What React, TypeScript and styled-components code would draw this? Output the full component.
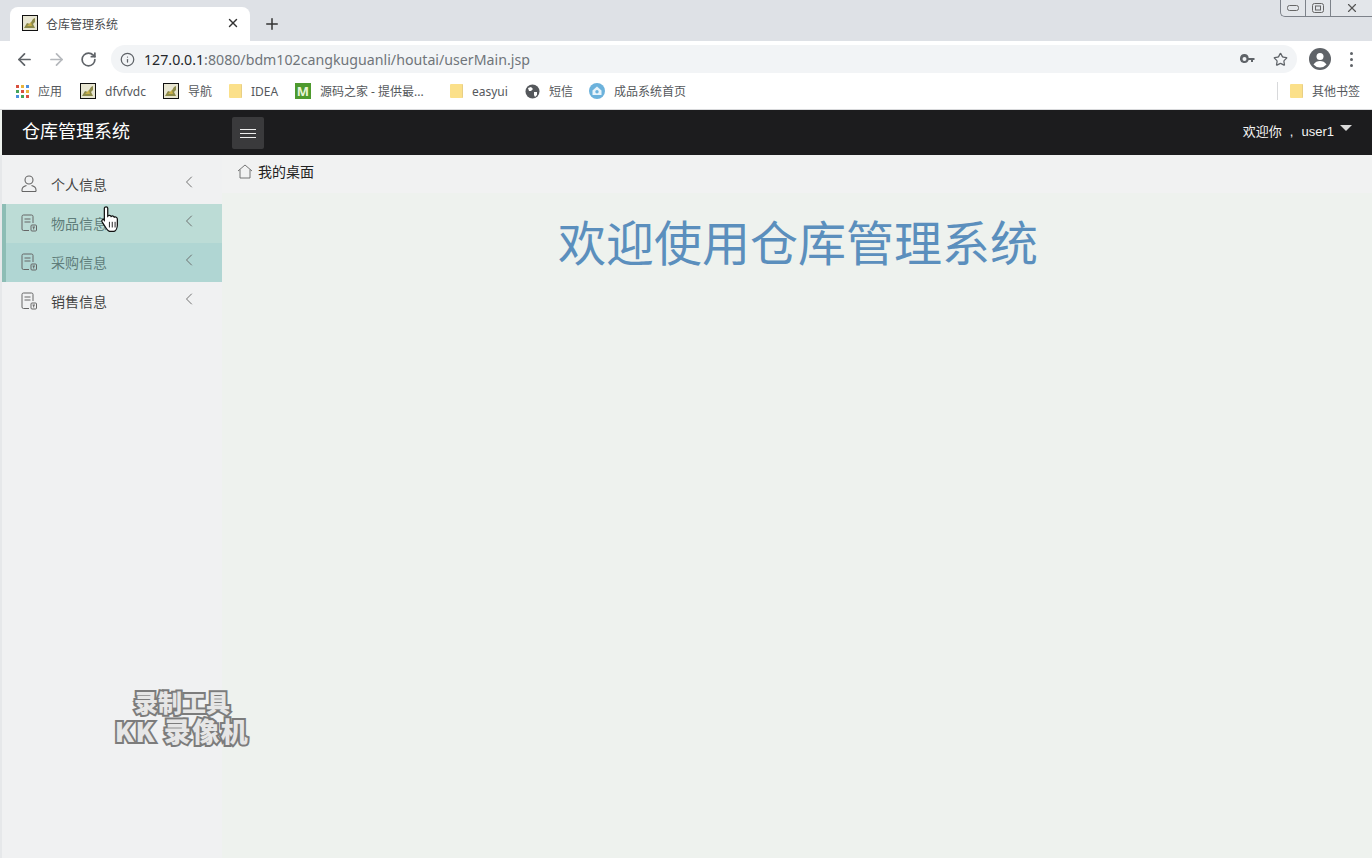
import React from 'react';
import styled, { createGlobalStyle } from 'styled-components';
import { ArrowLeft, ArrowRight, RotateCw, Info, Star, X, Plus, ChevronLeft } from 'lucide-react';

const GlobalStyle = createGlobalStyle`
  html, body {
    margin: 0;
    padding: 0;
    height: 100%;
    overflow: hidden;
  }
  body {
    font-family: "Liberation Sans", "Noto Sans CJK SC", sans-serif;
    background: #eef2ee;
  }
`;

const browserFont = '"Noto Sans", "Noto Sans CJK SC", sans-serif';

const Page = styled.div`
  position: relative;
  width: 1372px;
  height: 858px;
  display: flex;
  flex-direction: column;
  overflow: hidden;
`;

const TabStrip = styled.div`
  height: 41px;
  flex: none;
  display: flex;
  align-items: flex-end;
  padding-left: 10px;
  background: #dee1e6;
  position: relative;
`;
const Tab = styled.div`
  width: 240px;
  height: 34px;
  box-sizing: border-box;
  padding: 0 10px 2px 12px;
  display: flex;
  align-items: center;
  gap: 8px;
  background: #fff;
  border-radius: 8px 8px 0 0;
  font-size: 12px;
  color: #4a4c4f;
`;
const TabTitle = styled.span`
  flex: 1;
`;
const NewTab = styled.div`
  width: 44px;
  height: 34px;
  display: flex;
  align-items: center;
  justify-content: center;
  color: #333;
`;
const WindowControls = styled.div`
  position: absolute;
  top: -1px;
  right: 0;
  display: flex;
  height: 16px;
  border: 1px solid #7d828a;
  border-right: none;
  border-radius: 0 0 0 5px;
  background: #e3e6ea;
`;
const WindowButton = styled.div<{ $w: number }>`
  width: ${(p) => p.$w}px;
  display: flex;
  align-items: center;
  justify-content: center;
  color: #555;
  & + & {
    border-left: 1px solid #7d828a;
  }
`;

const Toolbar = styled.div`
  height: 36px;
  flex: none;
  display: flex;
  align-items: center;
  padding: 0 10px 0 8px;
  background: #fff;
  color: #5f6368;
`;
const NavButton = styled.div<{ $off?: boolean }>`
  width: 32px;
  height: 20px;
  display: flex;
  align-items: center;
  justify-content: center;
  color: ${(p) => (p.$off ? '#b5b8bc' : '#5f6368')};
`;
const Omnibox = styled.div`
  width: 1186px;
  height: 28px;
  margin-left: 7px;
  box-sizing: border-box;
  padding: 0 1px 0 9px;
  display: flex;
  align-items: center;
  border-radius: 14px;
  background: #f2f4f6;
  font-family: ${browserFont};
  font-size: 14.2px;
`;
const Url = styled.div`
  flex: 1;
  margin-left: 9px;
  color: #70757a;
  b {
    font-weight: 400;
    color: #26282b;
  }
`;
const OmniAction = styled.div`
  width: 32px;
  display: flex;
  justify-content: center;
  color: #5f6368;
`;
const ProfileSlot = styled.div`
  margin-left: 12px;
  display: flex;
`;
const MoreDots = styled.div`
  margin-left: 19px;
  display: flex;
  flex-direction: column;
  gap: 3px;
  i {
    width: 3px;
    height: 3px;
    border-radius: 50%;
    background: #5f6368;
  }
`;

const Bookmarks = styled.div`
  height: 33px;
  flex: none;
  box-sizing: border-box;
  display: flex;
  align-items: center;
  padding: 0 12px 4px 16px;
  background: #fff;
  border-bottom: 1px solid #d8d9db;
  font-family: ${browserFont};
  font-size: 12px;
  color: #55585c;
`;
const Bookmark = styled.div<{ $w: number }>`
  width: ${(p) => p.$w}px;
  flex: none;
  display: flex;
  align-items: center;
  gap: 9px;
  white-space: nowrap;
`;
const Spring = styled.div`
  flex: 1;
`;
const OtherBookmarks = styled.div`
  display: flex;
  align-items: center;
  gap: 9px;
  height: 18px;
  padding-left: 12px;
  border-left: 1px solid #d8d9db;
`;
const Folder = styled.div`
  width: 12px;
  height: 14px;
  background: #fbe08a;
  border-radius: 1px;
  border-right: 1px solid #e8cf85;
`;
const AppsGrid = styled.div`
  display: grid;
  grid-template-columns: repeat(3, 3px);
  gap: 2px;
`;
const AppDot = styled.i<{ $c: string }>`
  width: 3px;
  height: 3px;
  background: ${(p) => p.$c};
`;
const MLogo = styled.div`
  width: 16px;
  height: 16px;
  display: flex;
  align-items: center;
  justify-content: center;
  background: #4e9a2e;
  color: #e8f5d8;
  font-size: 13px;
  font-weight: 700;
`;

const TopBar = styled.header`
  height: 45px;
  flex: none;
  margin-left: 2px;
  display: flex;
  align-items: center;
  padding: 0 20px;
  background: #1c1c1e;
  color: #fff;
`;
const Brand = styled.div`
  width: 210px;
  font-size: 18px;
  margin-top: -5px;
`;
const MenuToggle = styled.div`
  width: 32px;
  height: 32px;
  display: flex;
  flex-direction: column;
  align-items: center;
  justify-content: center;
  gap: 3px;
  background: #3a3a3c;
  border-radius: 2px;
  margin-top: 1px;
  i {
    width: 16px;
    height: 1px;
    background: #eee;
  }
`;
const Welcome = styled.div`
  margin-left: auto;
  display: flex;
  align-items: center;
  gap: 6px;
  font-size: 13px;
  word-spacing: 4.5px;
  margin-top: -4px;
  color: #f4f4f4;
`;
const Caret = styled.i`
  width: 0;
  height: 0;
  margin-top: -5px;
  border-left: 6px solid transparent;
  border-right: 6px solid transparent;
  border-top: 6px solid #d8d8d8;
`;

const Body = styled.div`
  flex: 1;
  display: flex;
  padding-left: 2px;
  background: #e6e8ea;
`;
const Sidebar = styled.nav`
  width: 220px;
  flex: none;
  box-sizing: border-box;
  padding-top: 10px;
  background: #f0f1f2;
`;
const MenuItem = styled.div<{ $tone?: string }>`
  height: 39px;
  box-sizing: border-box;
  display: flex;
  align-items: center;
  padding: 0 23px 0 ${(p) => (p.$tone ? '15px' : '19px')};
  background: ${(p) => p.$tone || 'transparent'};
  border-left: ${(p) => (p.$tone ? '4px solid #8dbdb5' : 'none')};
  color: ${(p) => (p.$tone ? '#5f7d7a' : '#444')};
  font-size: 14px;
`;
const MenuIcon = styled.div`
  width: 16px;
  height: 18px;
  margin-right: 14px;
  margin-top: -1px;
  color: #666;
`;
const MenuLabel = styled.span`
  flex: 1;
  margin-top: -2px;
`;
const MenuChevron = styled.div`
  display: flex;
  margin-top: -5px;
  color: #666;
`;

const Main = styled.main`
  flex: 1;
  background: #eef2ee;
`;
const Crumb = styled.div`
  height: 38px;
  box-sizing: border-box;
  display: flex;
  align-items: center;
  gap: 5px;
  padding: 0 0 6px 15px;
  background: #f1f2f2;
  font-size: 14px;
  color: #222;
`;
const Heading = styled.h1`
  margin: 22px 0 0;
  padding-left: 2px;
  text-align: center;
  font-size: 48px;
  font-weight: 400;
  line-height: 60px;
  color: #5b8fbd;
`;

const Cursor = styled.svg`
  position: absolute;
  left: 100px;
  top: 206px;
`;
const Watermark = styled.div`
  position: absolute;
  left: 100px;
  top: 687px;
  width: 164px;
  text-align: center;
  font-family: "Noto Sans CJK SC", sans-serif;
  font-weight: 900;
  line-height: 29px;
  color: #e6e6e6;
  -webkit-text-stroke: 4px #7c7c7c;
  paint-order: stroke fill;
  white-space: nowrap;
`;
const WatermarkTop = styled.div`
  font-size: 24px;
`;
const WatermarkBottom = styled.div`
  font-size: 27px;
  letter-spacing: 1.5px;
`;

const Favicon = () => (
  <svg width="16" height="16" viewBox="0 0 16 16">
    <rect x="0.5" y="0.5" width="15" height="15" fill="#e8e6d2" stroke="#111" />
    <path d="M2 13 L5 8 L8 9 L11 4 L13 3 L13 7 L11 9 L13 13 Z" fill="#8c8a4a" />
    <path d="M5 11 L9 7 L10 11 Z" fill="#c8b04a" />
  </svg>
);

const PersonIcon = () => (
  <svg width="16" height="18" viewBox="0 0 16 18" fill="none" stroke="currentColor" strokeWidth="1.1">
    <circle cx="8" cy="5" r="4" />
    <path d="M1 16.5v-1.5c0-2.5 2.5-4 4.5-4.500M15 16.5v-1.5c0-2.5-2.5-4-4.5-4.5M1 16.5h14" />
  </svg>
);

const DocIcon = () => (
  <svg width="16" height="18" viewBox="0 0 16 18" fill="none" stroke="currentColor" strokeWidth="1">
    <path d="M8 16.5H2.5A1.5 1.5 0 0 1 1 15V2.5A1.5 1.5 0 0 1 2.5 1h8A1.5 1.5 0 0 1 12 2.5V9" />
    <path d="M3.5 5h6M3.5 8h6" />
    <rect x="10" y="11" width="5.5" height="6" rx="1" />
    <path d="M11.5 13h2.5M12.7 13v2.5" />
  </svg>
);

const HomeIcon = () => (
  <svg width="16" height="15" viewBox="0 0 16 15" fill="none" stroke="#666" strokeWidth="0.9">
    <path d="M1 7L8 1l7 6M3 5.5V14h10V5.5" />
  </svg>
);

const apps = ['#d9503f', '#e9b43c', '#4c8fe0', '#46a35a', '#d9503f', '#e9b43c', '#4c8fe0', '#46a35a', '#d9503f'];
const menu = ['个人信息', '物品信息', '采购信息', '销售信息'];
const tones = [undefined, '#bcdcd6', '#b0d6d3', undefined];

const App = () => {
  return (
    <Page>
      <GlobalStyle />
      <TabStrip>
        <Tab>
          <Favicon />
          <TabTitle>仓库管理系统</TabTitle>
          <X size={14} color="#333" strokeWidth={2.4} />
        </Tab>
        <NewTab>
          <Plus size={18} strokeWidth={2} />
        </NewTab>
        <WindowControls>
          <WindowButton $w={24}>
            <svg width="12" height="6" viewBox="0 0 12 6" fill="none" stroke="#666">
              <rect x="0.5" y="0.5" width="11" height="5" rx="2" />
            </svg>
          </WindowButton>
          <WindowButton $w={24}>
            <svg width="12" height="10" viewBox="0 0 12 10" fill="none" stroke="#666">
              <rect x="0.5" y="0.5" width="11" height="9" rx="2" />
              <rect x="3.5" y="3" width="5" height="4" />
            </svg>
          </WindowButton>
          <WindowButton $w={41}>
            <X size={14} strokeWidth={2} />
          </WindowButton>
        </WindowControls>
      </TabStrip>

      <Toolbar>
        <NavButton>
          <ArrowLeft size={19} strokeWidth={2.2} />
        </NavButton>
        <NavButton $off>
          <ArrowRight size={19} strokeWidth={2.2} />
        </NavButton>
        <NavButton>
          <RotateCw size={17} strokeWidth={2.4} />
        </NavButton>
        <Omnibox>
          <Info size={15} strokeWidth={2} color="#5f6368" />
          <Url>
            <b>127.0.0.1</b>:8080/bdm102cangkuguanli/houtai/userMain.jsp
          </Url>
          <OmniAction>
            <svg width="16" height="10" viewBox="0 0 16 10" fill="#5f6368">
              <path d="M4.5 0a4.5 4.5 0 1 0 4.2 6H11v2h2V6h1.5V4H8.7A4.5 4.5 0 0 0 4.5 0zm0 3a1.7 1.7 0 1 1 0 4 1.7 1.7 0 0 1 0-4z" />
            </svg>
          </OmniAction>
          <OmniAction>
            <Star size={15} strokeWidth={2} />
          </OmniAction>
        </Omnibox>
        <ProfileSlot>
          <svg width="22" height="22" viewBox="0 0 22 22">
            <circle cx="11" cy="11" r="11" fill="#5f6368" />
            <circle cx="11" cy="8.5" r="3.5" fill="#fff" />
            <path d="M4.5 16.5c1.5-2.5 4-3.5 6.5-3.5s5 1 6.5 3.5a8.5 8.5 0 0 1-13 0z" fill="#fff" />
          </svg>
        </ProfileSlot>
        <MoreDots>
          <i />
          <i />
          <i />
        </MoreDots>
      </Toolbar>

      <Bookmarks>
        <Bookmark $w={64}>
          <AppsGrid>
            {apps.map((c, i) => (
              <AppDot key={i} $c={c} />
            ))}
          </AppsGrid>
          <span>应用</span>
        </Bookmark>
        <Bookmark $w={83}>
          <Favicon />
          <span>dfvfvdc</span>
        </Bookmark>
        <Bookmark $w={66}>
          <Favicon />
          <span>导航</span>
        </Bookmark>
        <Bookmark $w={66}>
          <Folder />
          <span>IDEA</span>
        </Bookmark>
        <Bookmark $w={155}>
          <MLogo>M</MLogo>
          <span>源码之家 - 提供最...</span>
        </Bookmark>
        <Bookmark $w={75}>
          <Folder />
          <span>easyui</span>
        </Bookmark>
        <Bookmark $w={64}>
          <svg width="15" height="15" viewBox="0 0 15 15">
            <circle cx="7.5" cy="7.5" r="7" fill="#55585c" />
            <path d="M3 4l3-1 2 2-2 2-2 0zM9 8l3 0 0 3-2 2-1-2z" fill="#fff" />
          </svg>
          <span>短信</span>
        </Bookmark>
        <Bookmark $w={120}>
          <svg width="16" height="16" viewBox="0 0 16 16">
            <circle cx="8" cy="8" r="8" fill="#6cb2dc" />
            <path d="M8 3.5L12.5 7.5V12H3.5V7.5Z" fill="#e8f3fa" />
            <circle cx="8" cy="8.8" r="1.7" fill="#6cb2dc" />
          </svg>
          <span>成品系统首页</span>
        </Bookmark>
        <Spring />
        <OtherBookmarks>
          <Folder />
          <span>其他书签</span>
        </OtherBookmarks>
      </Bookmarks>

      <TopBar>
        <Brand>仓库管理系统</Brand>
        <MenuToggle>
          <i />
          <i />
          <i />
        </MenuToggle>
        <Welcome>
          <span>欢迎你 , user1</span>
          <Caret />
        </Welcome>
      </TopBar>

      <Body>
        <Sidebar>
          {menu.map((label, i) => (
            <MenuItem key={label} $tone={tones[i]}>
              <MenuIcon>{i === 0 ? <PersonIcon /> : <DocIcon />}</MenuIcon>
              <MenuLabel>{label}</MenuLabel>
              <MenuChevron>
                <ChevronLeft size={20} strokeWidth={1.1} />
              </MenuChevron>
            </MenuItem>
          ))}
        </Sidebar>
        <Main>
          <Crumb>
            <HomeIcon />
            <span>我的桌面</span>
          </Crumb>
          <Heading>欢迎使用仓库管理系统</Heading>
        </Main>
      </Body>

      <Cursor width="20" height="26" viewBox="0 0 16 23">
        <path
          d="M3 2c0-1.5 3-1.5 3 0v7c1-1 2.5-.8 3 .3 1-.8 2.4-.5 2.8.6 1-.5 2.7 0 2.7 1.5V17c0 2.5-1.5 5-3 5.5H8c-2 0-3-2-4.5-4.5L1 14c-.8-1.5 1-2.8 2-1.5z"
          fill="#fff"
          stroke="#111"
          strokeWidth="1.1"
        />
        <path d="M7.5 14v5M10 14v5M12.5 14v5" stroke="#111" strokeWidth="0.8" />
      </Cursor>

      <Watermark>
        <WatermarkTop>录制工具</WatermarkTop>
        <WatermarkBottom>KK 录像机</WatermarkBottom>
      </Watermark>
    </Page>
  );
};

export default App;
